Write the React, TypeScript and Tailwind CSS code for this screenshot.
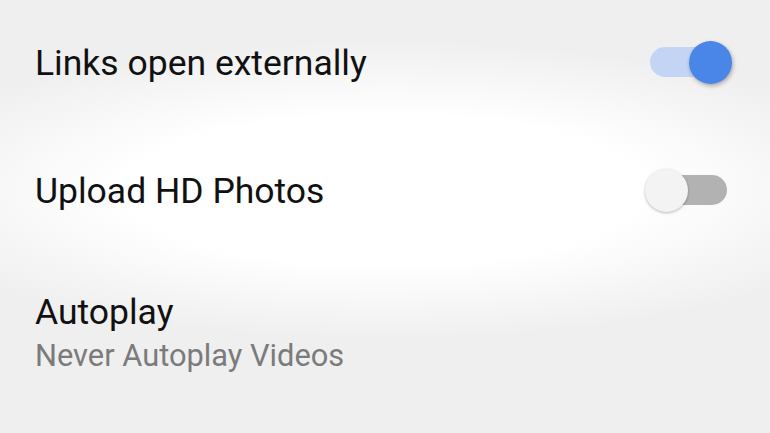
function Toggle({ on }: { on: boolean }) {
  return (
    <div className="relative w-[87px] h-[43px] shrink-0">
      <div
        className={
          on
            ? 'absolute left-[5px] top-[6.5px] w-[77px] h-[30px] rounded-full bg-[#c3d4f4]'
            : 'absolute left-[5px] top-[6.5px] w-[77px] h-[30px] rounded-full bg-[#b2b2b2]'
        }
      />
      <div
        className={
          on
            ? 'absolute right-0 top-0 w-[43px] h-[43px] rounded-full bg-[#4a86e8] shadow-[1px_2px_4px_rgba(0,0,0,0.3)]'
            : 'absolute left-0 top-0 w-[43px] h-[43px] rounded-full bg-[#f3f3f3] shadow-[0_1px_3px_rgba(0,0,0,0.28)]'
        }
      />
    </div>
  );
}

export default function App() {
  return (
    <div className="w-[770px] h-[433px] overflow-hidden bg-[#efefef] bg-[radial-gradient(ellipse_520px_150px_at_50%_190px,#ffffff_50%,#efefef_100%)] font-['Roboto',sans-serif] text-[#111]">
      <div className="flex items-center justify-between h-[124px] pl-[35px] pr-[38px]">
        <span className="text-[35.5px] leading-none pt-[4px]">Links open externally</span>
        <Toggle on />
      </div>
      <div className="flex items-center justify-between h-[132px] pl-[35px] pr-[38px]">
        <span className="text-[35.5px] leading-none pt-[4px]">Upload HD Photos</span>
        <Toggle on={false} />
      </div>
      <div className="flex flex-col pl-[35px] pt-[39px]">
        <span className="text-[35.5px] leading-none">Autoplay</span>
        <span className="text-[30.8px] leading-none mt-[10.5px] text-[#7b7b7b]">Never Autoplay Videos</span>
      </div>
    </div>
  );
}
